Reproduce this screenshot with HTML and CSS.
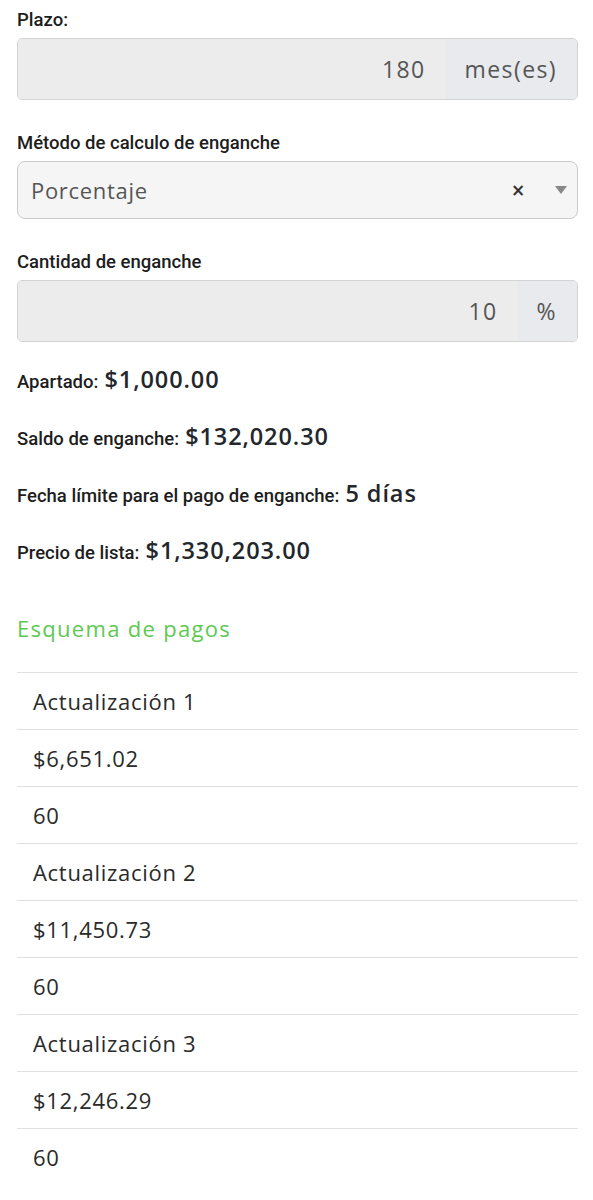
FILE: index.html
```html
<!DOCTYPE html>
<html lang="es">

<head>
  <meta charset="UTF-8" />
  <meta name="viewport" content="width=device-width, initial-scale=1.0" />
  <title>Cotizador</title>
  <link rel="stylesheet" href="styles.css">
</head>

<body>
  <div class="page">
    <div class="field">
      <label class="field-label">Plazo:</label>
      <div class="input-group">
        <span class="input-value">180</span>
        <span class="input-addon">mes(es)</span>
      </div>
    </div>

    <div class="field">
      <label class="field-label">Método de calculo de enganche</label>
      <div class="select">
        <span class="select-text">Porcentaje</span>
        <span class="select-clear">&times;</span>
        <span class="select-arrow"></span>
      </div>
    </div>

    <div class="field">
      <label class="field-label">Cantidad de enganche</label>
      <div class="input-group">
        <span class="input-value">10</span>
        <span class="input-addon">%</span>
      </div>
    </div>

    <div class="summary">
      <p class="summary-line"><span class="summary-label">Apartado:</span> <strong>$1,000.00</strong></p>
      <p class="summary-line"><span class="summary-label">Saldo de enganche:</span> <strong>$132,020.30</strong></p>
      <p class="summary-line"><span class="summary-label">Fecha límite para el pago de enganche:</span> <strong>5 días</strong></p>
      <p class="summary-line"><span class="summary-label">Precio de lista:</span> <strong>$1,330,203.00</strong></p>
    </div>

    <h3 class="section-title">Esquema de pagos</h3>

    <table class="payments">
      <tbody>
        <tr><td>Actualización 1</td></tr>
        <tr><td>$6,651.02</td></tr>
        <tr><td>60</td></tr>
        <tr><td>Actualización 2</td></tr>
        <tr><td>$11,450.73</td></tr>
        <tr><td>60</td></tr>
        <tr><td>Actualización 3</td></tr>
        <tr><td>$12,246.29</td></tr>
        <tr><td>60</td></tr>
      </tbody>
    </table>
  </div>
</body>

</html>
```

FILE: styles.css
```css
* {
  margin: 0;
  padding: 0;
  box-sizing: border-box;
}

body {
  background: #fff;
  color: #212529;
  font-family: "Open Sans", "DejaVu Sans", sans-serif;
}

.page {
  padding: 10px 15px 0 17px;
}

/**
 * form
 */
.field {
  margin-bottom: 33px;
}

.field-label {
  display: block;
  height: 20px;
  line-height: 20px;
  margin-bottom: 8px;
  font-family: Roboto, "Liberation Sans", sans-serif;
  font-size: 18.5px;
  font-weight: 500;
  color: #1d1d1d;
}

.input-group {
  display: flex;
  height: 62px;
  border: 1px solid #d3d3d3;
  border-radius: 5px;
  overflow: hidden;
  box-shadow: inset 0 1px 2px rgba(0, 0, 0, 0.08);
  font-size: 23px;
  letter-spacing: 1.4px;
  color: #555;
}

.input-value {
  flex: 1;
  display: flex;
  align-items: center;
  justify-content: flex-end;
  padding-right: 20px;
  background: #ececec;
}

.input-addon {
  display: flex;
  align-items: center;
  padding: 0 20px 0 18px;
  background: #e8eaee;
  border-left: 1px solid #e6e8eb;
}

.select {
  display: flex;
  align-items: center;
  height: 58px;
  padding: 0 10px 0 13px;
  background: #f5f5f5;
  border: 1px solid #cbcbcb;
  border-radius: 8px;
  color: #555;
  font-size: 22px;
  letter-spacing: 0.7px;
}

.select-text {
  flex: 1;
}

.select-clear {
  font-family: "DejaVu Sans", sans-serif;
  font-size: 17px;
  font-weight: 700;
  color: #333;
  margin-right: 29px;
}

.select-arrow {
  width: 0;
  height: 0;
  border-left: 6px solid transparent;
  border-right: 6px solid transparent;
  border-top: 8px solid #888;
}

/**
 * resumen
 */
.summary {
  margin-top: -11px;
}

.summary-line {
  height: 30px;
  line-height: 30px;
  margin-bottom: 27px;
  font-size: 23.5px;
}

.summary-label {
  font-family: Roboto, "Liberation Sans", sans-serif;
  font-size: 18.5px;
  font-weight: 500;
  letter-spacing: 0;
  color: #1d1d1d;
}

.summary-line strong {
  font-weight: 600;
  letter-spacing: 0.9px;
  color: #23262b;
}

.section-title {
  height: 30px;
  line-height: 30px;
  margin-top: 48px;
  margin-bottom: 29px;
  font-size: 22px;
  font-weight: 400;
  letter-spacing: 1.3px;
  color: #5ec952;
}

/**
 * tabla
 */
.payments {
  width: 100%;
  border-collapse: collapse;
}

.payments td {
  height: 57px;
  padding: 0 16px;
  border-top: 1px solid #e0e0e0;
  font-size: 22px;
  letter-spacing: 0.7px;
  color: #2a2a2a;
  vertical-align: middle;
}
```
